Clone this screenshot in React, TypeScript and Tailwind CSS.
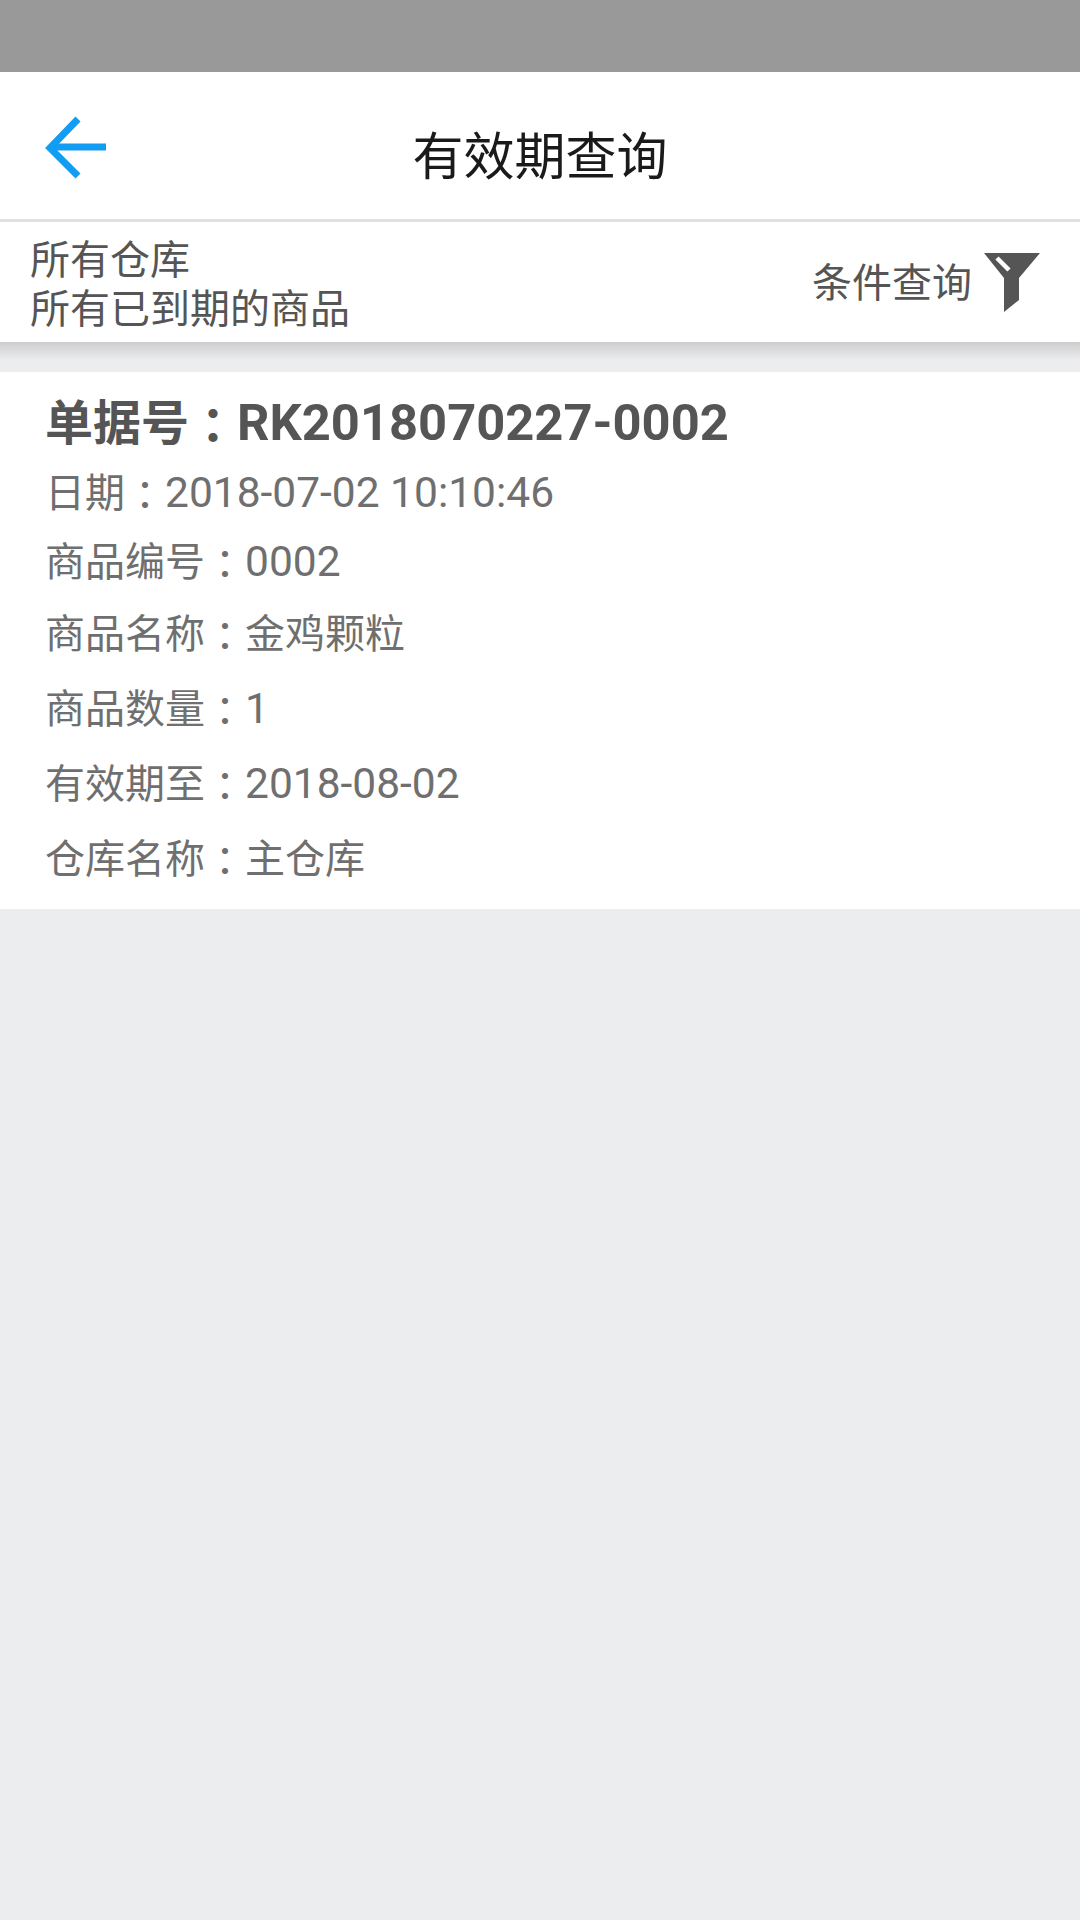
const rows = [
  { label: "日期", value: "2018-07-02 10:10:46", latin: true, height: "h-[69px]" },
  { label: "商品编号", value: "0002", latin: true, height: "h-[68px]" },
  { label: "商品名称", value: "金鸡颗粒", latin: false, height: "h-[75px]" },
  { label: "商品数量", value: "1", latin: true, height: "h-[76px]" },
  { label: "有效期至", value: "2018-08-02", latin: true, height: "h-[75px]" },
  { label: "仓库名称", value: "主仓库", latin: false, height: "h-[73px]" },
];

const font = "font-['Roboto','Noto_Sans_CJK_SC',sans-serif]";

// full-width colon sits mid-height in the TC cut
function Colon() {
  return <span className="inline-block translate-y-[3px] font-['Noto_Sans_CJK_TC',sans-serif]">：</span>;
}

export default function App() {
  return (
    <div className={`${font} w-[1080px] h-[1920px] bg-[#ecedef] flex flex-col overflow-hidden`}>
      {/* status bar */}
      <div className="h-[72px] shrink-0 bg-[#999999]" />

      {/* title bar */}
      <div className="relative h-[147px] shrink-0 bg-white flex items-center justify-center">
        <svg
          className="absolute left-[45px] top-[44px]"
          width="63"
          height="66"
          viewBox="0 0 63 66"
          fill="none"
        >
          <path d="M33 3 L5 32 L33 60" stroke="#129cf2" strokeWidth="7" strokeLinecap="butt" />
          <path d="M6 31 H61" stroke="#129cf2" strokeWidth="7" />
        </svg>
        <span className="text-[51px] leading-none text-[#1a1a1a] mt-[24px]">有效期查询</span>
      </div>
      <div className="h-[3px] shrink-0 bg-[#e0e0e0]" />

      {/* filter summary */}
      <div className="h-[120px] shrink-0 bg-white flex items-center justify-between pl-[30px] pr-[40px] text-[40px] text-[#555555]">
        <div className="leading-[49px] mt-[5px]">
          <div>所有仓库</div>
          <div>所有已到期的商品</div>
        </div>
        <div className="flex items-center gap-[12px]">
          <span className="leading-none mt-[4px]">条件查询</span>
          <svg width="56" height="60" viewBox="0 0 56 60" className="mt-[1px]">
            <path d="M0 0 H56 L35 25 V47 L20 59 V25 Z" fill="#555555" />
            <path d="M13 5 L25 17" stroke="#ffffff" strokeWidth="4.5" />
          </svg>
        </div>
      </div>

      {/* shadow under the summary */}
      <div className="h-[30px] shrink-0 bg-gradient-to-b from-[#cdcdcf] to-[#ecedef] to-60%" />

      {/* record card */}
      <div className="h-[537px] shrink-0 bg-white pl-[45px] flex flex-col">
        <div className="h-[86px] shrink-0 pt-[13px] flex items-center text-[48px] font-bold text-[#555555] leading-none">
          <span>
            单据号
            <Colon />
            <span className="text-[50.7px]">RK2018070227-0002</span>
          </span>
        </div>
        {rows.map((row) => (
          <div
            key={row.label}
            className={`${row.height} shrink-0 flex items-center text-[40px] leading-none text-[#6f6f6f]`}
          >
            <span>
              {row.label}
              <Colon />
              {row.latin ? <span className="text-[42.5px]">{row.value}</span> : row.value}
            </span>
          </div>
        ))}
      </div>
    </div>
  );
}
